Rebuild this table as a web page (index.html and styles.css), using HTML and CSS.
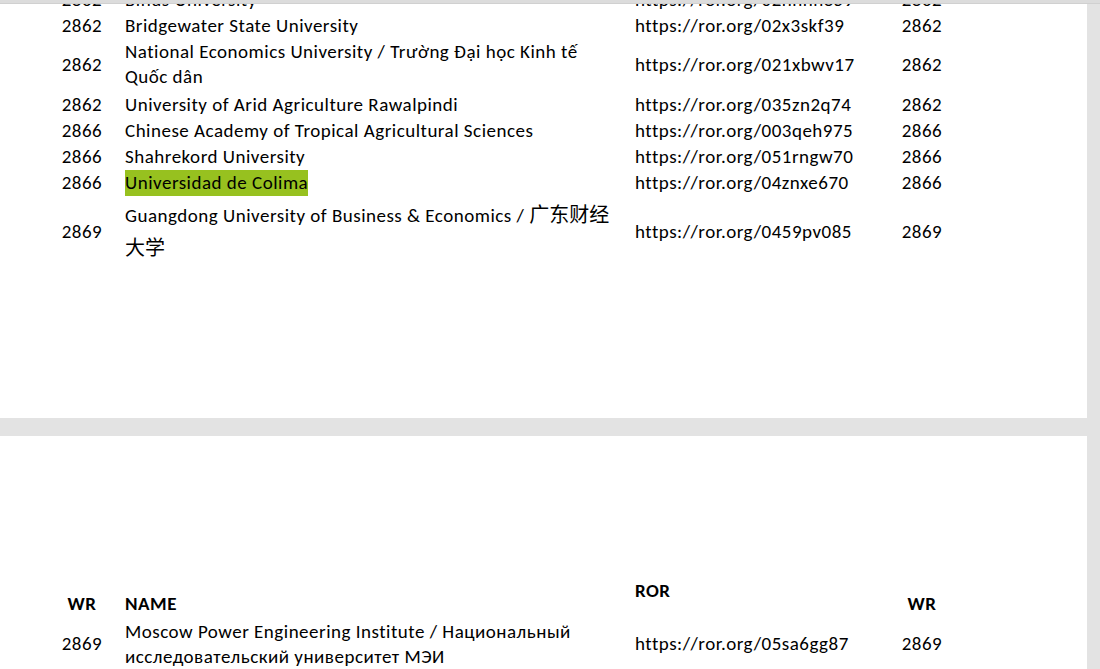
FILE: index.html
```html
<!DOCTYPE html>
<html lang="en">
<head>
    <meta charset="UTF-8">
    <title>World Ranking - ROR</title>
    <link rel="stylesheet" href="styles.css">
</head>
<body>

    <div class="barra-topo"></div>

    <div class="janela">
        <div class="visualizador">

            <!-- pagina 1 (rolada, primeira linha cortada) -->
            <div class="pagina pagina-um">
                <table class="tabela">
                    <colgroup>
                        <col class="c-wr"><col class="c-nome"><col class="c-ror"><col class="c-wr2">
                    </colgroup>
                    <tr>
                        <td class="wr">2862</td>
                        <td class="nome">Binus University</td>
                        <td class="ror">https://ror.org/02nnhh859</td>
                        <td class="wr">2862</td>
                    </tr>
                    <tr>
                        <td class="wr">2862</td>
                        <td class="nome">Bridgewater State University</td>
                        <td class="ror">https://ror.org/02x3skf39</td>
                        <td class="wr">2862</td>
                    </tr>
                    <tr class="dupla">
                        <td class="wr">2862</td>
                        <td class="nome">National Economics University / Trường Đại học Kinh tế<br>Quốc dân</td>
                        <td class="ror">https://ror.org/021xbwv17</td>
                        <td class="wr">2862</td>
                    </tr>
                    <tr>
                        <td class="wr">2862</td>
                        <td class="nome">University of Arid Agriculture Rawalpindi</td>
                        <td class="ror">https://ror.org/035zn2q74</td>
                        <td class="wr">2862</td>
                    </tr>
                    <tr>
                        <td class="wr">2866</td>
                        <td class="nome">Chinese Academy of Tropical Agricultural Sciences</td>
                        <td class="ror">https://ror.org/003qeh975</td>
                        <td class="wr">2866</td>
                    </tr>
                    <tr>
                        <td class="wr">2866</td>
                        <td class="nome">Shahrekord University</td>
                        <td class="ror">https://ror.org/051rngw70</td>
                        <td class="wr">2866</td>
                    </tr>
                    <tr>
                        <td class="wr">2866</td>
                        <td class="nome"><span class="marca">Universidad de Colima</span></td>
                        <td class="ror">https://ror.org/04znxe670</td>
                        <td class="wr">2866</td>
                    </tr>
                    <tr class="cjk">
                        <td class="wr">2869</td>
                        <td class="nome">Guangdong University of Business &amp; Economics / <span class="han">广东财经</span><br><span class="han">大学</span></td>
                        <td class="ror">https://ror.org/0459pv085</td>
                        <td class="wr">2869</td>
                    </tr>
                </table>
            </div>

            <!-- pagina 2 -->
            <div class="pagina pagina-dois">
                <table class="tabela">
                    <colgroup>
                        <col class="c-wr"><col class="c-nome"><col class="c-ror"><col class="c-wr2">
                    </colgroup>
                    <tr class="cabecalho">
                        <th class="wr">WR</th>
                        <th class="nome">NAME</th>
                        <th class="ror topo">ROR</th>
                        <th class="wr">WR</th>
                    </tr>
                    <tr class="dupla-b">
                        <td class="wr">2869</td>
                        <td class="nome">Moscow Power Engineering Institute / Национальный<br>исследовательский университет МЭИ</td>
                        <td class="ror">https://ror.org/05sa6gg87</td>
                        <td class="wr">2869</td>
                    </tr>
                </table>
            </div>

        </div>
        <div class="lateral"></div>
    </div>

</body>
</html>
```

FILE: styles.css
```css
body {
    margin: 0;
    width: 1100px;
    height: 669px;
    overflow: hidden;
    background: #e3e3e3;
    font-family: Carlito, Lato, "Noto Sans", "Noto Sans CJK SC", sans-serif;
    color: #000;
}
.barra-topo {
    position: absolute;
    top: 0;
    left: 0;
    right: 0;
    height: 3px;
    background: #dcdcdc;
    border-bottom: 1px solid #d0d0d0;
    z-index: 2;
}
.janela {
    display: flex;
    height: 669px;
}
.visualizador {
    width: 1087px;
    display: flex;
    flex-direction: column;
    gap: 18px;
    margin-top: -14px;
}
.lateral {
    width: 13px;
    background: #e3e3e3;
}
.pagina {
    background: #fff;
    flex-shrink: 0;
}
.pagina-um {
    height: 432px;
}
.pagina-dois {
    padding-top: 140px;
    height: 400px;
}
.tabela {
    margin-left: 45px;
    border-collapse: collapse;
    table-layout: fixed;
    width: 919px;
    font-size: 19px;
    line-height: 25px;
    letter-spacing: 0.5px;
}
.c-wr { width: 74px; }
.c-nome { width: 509px; }
.c-ror { width: 252px; }
.c-wr2 { width: 84px; }
.tabela td, .tabela th {
    padding: 0.5px 0;
    vertical-align: middle;
    white-space: nowrap;
}
.tabela .wr {
    text-align: center;
}
.tabela .nome {
    padding-left: 6px;
    text-align: left;
}
.tabela .ror {
    padding-left: 7px;
    text-align: left;
}
.dupla td {
    padding-top: 1px;
    padding-bottom: 2.5px;
}
.cjk td {
    line-height: 33px;
    padding: 3px 0 4px;
}
.cjk td.nome { padding-left: 6px; }
.cjk td.ror { padding-left: 7px; }
.han {
    font-size: 20px;
    letter-spacing: 0;
}
.marca {
    background: #97c11f;
    padding: 1px 0 2px;
}
.cabecalho th {
    font-weight: bold;
    vertical-align: bottom;
    height: 38px;
    padding: 0;
}
.cabecalho th.topo {
    vertical-align: top;
    padding-top: 2px;
}
.dupla-b td {
    padding: 2.5px 0;
}
.dupla-b td.nome { padding-left: 6px; }
.dupla-b td.ror { padding-left: 7px; }
```
